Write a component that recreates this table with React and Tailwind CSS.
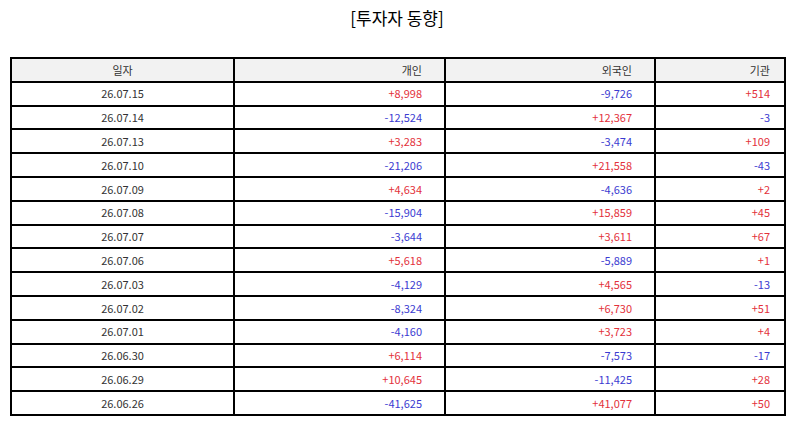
const rows = [
  ["26.07.15", "+8,998", "-9,726", "+514"],
  ["26.07.14", "-12,524", "+12,367", "-3"],
  ["26.07.13", "+3,283", "-3,474", "+109"],
  ["26.07.10", "-21,206", "+21,558", "-43"],
  ["26.07.09", "+4,634", "-4,636", "+2"],
  ["26.07.08", "-15,904", "+15,859", "+45"],
  ["26.07.07", "-3,644", "+3,611", "+67"],
  ["26.07.06", "+5,618", "-5,889", "+1"],
  ["26.07.03", "-4,129", "+4,565", "-13"],
  ["26.07.02", "-8,324", "+6,730", "+51"],
  ["26.07.01", "-4,160", "+3,723", "+4"],
  ["26.06.30", "+6,114", "-7,573", "-17"],
  ["26.06.29", "+10,645", "-11,425", "+28"],
  ["26.06.26", "-41,625", "+41,077", "+50"],
];

const tone = (v) => (v.startsWith("+") ? "text-[#e3313b]" : "text-[#3b3bd1]");

const App = () => {
  return (
    <div className="w-[794px] h-[425px] bg-white font-['Noto_Sans_CJK_KR','Noto_Sans',sans-serif] text-[#333]">
      <h1 className="pt-[6px] text-center text-[17px] leading-[24px] text-black">[투자자 동향]</h1>

      <div className="pl-[10px] pt-[27px]">
        <table className="w-[774px] border-collapse table-fixed text-[11px]">
          <colgroup>
            <col className="w-[223px]" />
            <col className="w-[211px]" />
            <col className="w-[210px]" />
            <col className="w-[130px]" />
          </colgroup>
          <thead>
            <tr className="h-[23.8px] bg-[#f2f2f2]">
              <th className="border-2 border-black font-normal text-center">일자</th>
              <th className="border-2 border-black font-normal text-right pr-[22px]">개인</th>
              <th className="border-2 border-black font-normal text-right pr-[22px]">외국인</th>
              <th className="border-2 border-black font-normal text-right pr-[14px]">기관</th>
            </tr>
          </thead>
          <tbody>
            {rows.map(([date, ind, frn, inst]) => (
              <tr key={date} className="h-[23.8px]">
                <td className="border-2 border-black text-center">{date}</td>
                <td className={`border-2 border-black text-right pr-[22px] ${tone(ind)}`}>{ind}</td>
                <td className={`border-2 border-black text-right pr-[22px] ${tone(frn)}`}>{frn}</td>
                <td className={`border-2 border-black text-right pr-[14px] ${tone(inst)}`}>{inst}</td>
              </tr>
            ))}
          </tbody>
        </table>
      </div>
    </div>
  );
};

export default App;
